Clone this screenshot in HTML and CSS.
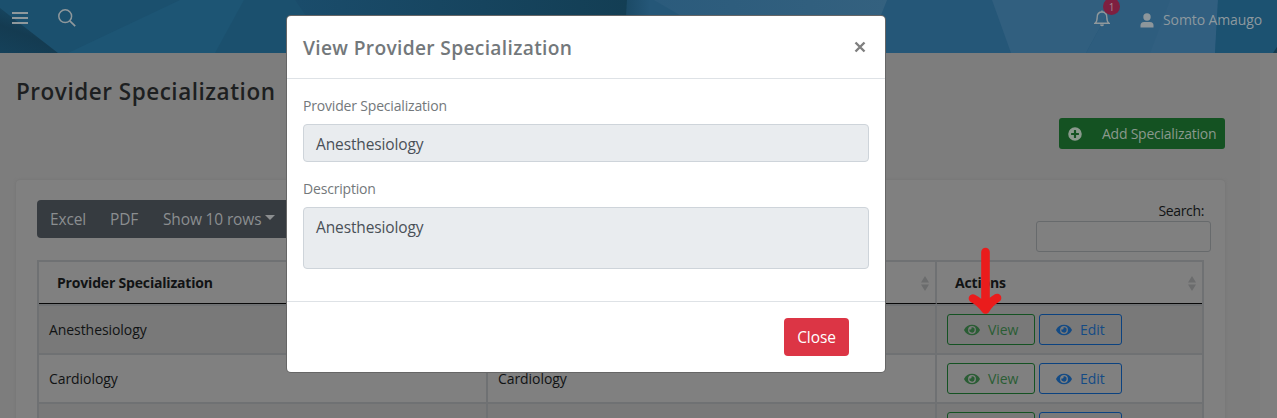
FILE: index.html
```html
<!DOCTYPE html>
<html lang="en">
<head>
<meta charset="utf-8">
<title>Provider Specialization</title>
<link rel="stylesheet" href="styles.css">
</head>
<body>
<svg width="0" height="0" class="defs">
  <symbol id="eye" viewBox="0 0 576 512"><path d="M572.52 241.4C518.29 135.59 410.93 64 288 64S57.68 135.64 3.48 241.41a32.35 32.35 0 0 0 0 29.19C57.71 376.41 165.07 448 288 448s230.32-71.64 284.52-177.41a32.35 32.35 0 0 0 0-29.19zM288 400a144 144 0 1 1 144-144 143.93 143.93 0 0 1-144 144zm0-240a95.31 95.31 0 0 0-25.31 3.79 47.85 47.85 0 0 1-66.9 66.9A95.78 95.78 0 1 0 288 160z"/></symbol>
</svg>
<div class="page">
  <header class="topbar">
    <svg class="facets" viewBox="0 0 1277 53" preserveAspectRatio="none">
      <defs>
        <linearGradient id="fold" x1="0" y1="1" x2="0.5" y2="0"><stop offset="0" stop-color="#15415a"/><stop offset=".5" stop-color="#143b51"/><stop offset="1" stop-color="#184a66"/></linearGradient>
        <linearGradient id="mid"><stop offset="0" stop-color="#1a4c6b"/><stop offset="1" stop-color="#133e54"/></linearGradient>
        <linearGradient id="edge"><stop offset="0" stop-color="#1b4a66"/><stop offset="1" stop-color="#255778"/></linearGradient>
        <linearGradient id="pale" x1="0" x2="1"><stop offset="0" stop-color="#2b5b7c"/><stop offset="1" stop-color="#34617f"/></linearGradient>
      </defs>
      <rect width="1277" height="53" fill="#1b506e"/>
      <path d="M0 8 58 53H0z" fill="url(#fold)"/>
      <path d="M68 53 180 0H244L215 53z" fill="#1d5574"/>
      <path d="M295 0H627L626 53H331z" fill="url(#mid)"/>
      <path d="M627 0H1277V53H626z" fill="#255778"/>
      <path d="M627 0H650V53H626z" fill="url(#edge)"/>
      <path d="M654 0H887L881 15 860 53H745z" fill="url(#pale)"/>
      <path d="M992 0H1115L1086 53H1011z" fill="#315f7f"/>
      <path d="M1115 0H1218L1215 53H1086z" fill="#2e5d7e"/>
      <path d="M1170 0H1218L1215 53H1150z" fill="#315f80"/>
      <path d="M1218 0H1277V53H1215z" fill="#1c5271"/>
      <path d="M1273 53 1277 47V53z" fill="#123b50"/>
    </svg>
    <div class="bar">
      <svg class="menu" viewBox="0 0 16 12"><path d="M0 1H16M0 6H16M0 11H16" stroke="#8f989c" stroke-width="2"/></svg>
      <svg class="lens" viewBox="0 0 18 18"><circle cx="7.2" cy="7.2" r="6.4" fill="none" stroke="#8f989c" stroke-width="1.5"/><path d="M11.8 11.8 17.2 17.2" stroke="#8f989c" stroke-width="1.7"/></svg>
      <div class="bellbox">
        <svg class="bell" viewBox="0 0 16 17"><path d="M1 13.2C2.6 12 3.2 10.5 3.2 7.2 3.2 3.8 5.2 2 8 2s4.800 1.800 4.800 5.200C12.800 10.500 13.400 12 15 13.200z" fill="none" stroke="#8f989c" stroke-width="1.400"/><path d="M8 .5V2M6.500 14.500Q8 16.500 9.500 14.500" fill="none" stroke="#8f989c" stroke-width="1.400"/></svg>
        <span class="badge">1</span>
      </div>
      <svg class="person" viewBox="0 0 14 15"><circle cx="7" cy="4" r="3.700"/><path d="M.5 14.500V12.500Q.5 9 4 9H10Q13.500 9 13.500 12.500V14.500z"/></svg>
      <span class="user">Somto Amaugo</span>
    </div>
  </header>
  <main class="content">
    <h1 class="heading"><span>Provider Specialization</span></h1>
    <div class="toolbar">
      <button class="add"><svg viewBox="0 0 512 512"><path d="M256 8a248 248 0 1 0 0 496 248 248 0 0 0 0-496zm144 276q0 12-12 12h-92v92q0 12-12 12h-56q-12 0-12-12v-92h-92q-12 0-12-12v-56q0-12 12-12h92v-92q0-12 12-12h56q12 0 12 12v92h92q12 0 12 12z"/></svg><span>Add Specialization</span></button>
    </div>
    <section class="card">
      <div class="controls">
        <div class="group"><span class="excel">Excel</span><span class="pdf">PDF</span><span class="rows">Show 10 rows</span><i class="caret"></i></div>
        <div class="search"><label>Search:</label><div class="searchbox"></div></div>
      </div>
      <div class="grid">
        <div class="row head"><div class="cell"><b>Provider Specialization</b></div><div class="cell"><svg class="sort" viewBox="0 0 8 15"><path d="M0 6.500 4 0 8 6.500zM0 8.500H8L4 15z"/></svg></div><div class="cell"><b>Actions</b><svg class="sort" viewBox="0 0 8 15"><path d="M0 6.500 4 0 8 6.500zM0 8.500H8L4 15z"/></svg></div></div>
        <div class="row odd"><div class="cell"><span>Anesthesiology</span></div><div class="cell"></div><div class="cell acts"><button class="view"><svg><use href="#eye"/></svg><span>View</span></button><button class="edit"><svg><use href="#eye"/></svg><span>Edit</span></button></div></div>
        <div class="row"><div class="cell"><span>Cardiology</span></div><div class="cell"><span>Cardiology</span></div><div class="cell acts"><button class="view"><svg><use href="#eye"/></svg><span>View</span></button><button class="edit"><svg><use href="#eye"/></svg><span>Edit</span></button></div></div>
        <div class="row odd"><div class="cell"></div><div class="cell"></div><div class="cell acts"><button class="view"></button><button class="edit"></button></div></div>
      </div>
    </section>
  </main>
</div>
<div class="modal">
  <div class="modal-head"><h2><span>View Provider Specialization</span></h2><svg class="x" viewBox="0 0 12 12"><path d="M1.500 1.500 10.500 10.500M10.500 1.500 1.500 10.500" stroke="#7f7f7f" stroke-width="2.400"/></svg></div>
  <div class="modal-body">
    <label class="l1"><span>Provider Specialization</span></label>
    <div class="field"><span>Anesthesiology</span></div>
    <label class="l2"><span>Description</span></label>
    <div class="field area"><span>Anesthesiology</span></div>
  </div>
  <div class="modal-foot"><button class="close"><span>Close</span></button></div>
</div>
<svg class="arrow" viewBox="0 0 34 68"><path d="M17.500 5V61M5 51.500Q12 55 17.500 62.500Q22 55 29 51" fill="none" stroke="#ea1c1c" stroke-width="8.600" stroke-linecap="round" stroke-linejoin="round"/></svg>
</body>
</html>
```
FILE: styles.css
```css
* { box-sizing: border-box; }
body { margin: 0; width: 1277px; height: 418px; overflow: hidden; position: relative; font-family: "Open Sans", "Noto Sans", sans-serif; font-size: 14px; line-height: 20px; color: #111314; background: #7d7d7d; }
.defs { position: absolute; }
span, b, label { white-space: nowrap; }
button { font: inherit; background: none; border: 0; padding: 0; display: flex; align-items: center; }
.page { height: 418px; overflow: hidden; background: linear-gradient(90deg, #7d7d7d 1260px, #7f7f7f 1260px); }
.topbar { height: 53px; position: relative; }
.facets { position: absolute; inset: 0; width: 100%; height: 100%; }
.bar { position: relative; display: flex; align-items: flex-start; padding-left: 12px; height: 53px; }
.menu { width: 16px; height: 12px; margin-top: 12px; }
.lens { width: 18px; height: 18px; margin: 9px 0 0 30px; }
.bellbox { position: relative; margin: 10px 0 0 1018px; width: 16px; height: 17px; }
.bell { width: 16px; height: 17px; display: block; }
.badge { position: absolute; left: 9px; top: -12px; width: 17px; height: 17px; border-radius: 50%; background: #7e1f40; color: #a58a94; font-size: 10px; line-height: 18px; text-align: center; }
.person { width: 14px; height: 15px; margin: 13px 0 0 30px; fill: #8d969b; }
.user { margin: 10px 0 0 9px; color: #8d999f; letter-spacing: -.1px; }
.content { padding: 0 52px 0 16px; }
.heading { margin: 0; height: 65px; padding-top: 23px; font-size: 22.5px; line-height: 32px; font-weight: 600; letter-spacing: .52px; color: #1d1f21; }
.toolbar { display: flex; justify-content: flex-end; height: 62px; }
.add { width: 166px; height: 31px; border-radius: 3px; background: #145222; color: #8a998d; padding-left: 9px; letter-spacing: -.24px; }
.add svg { width: 14px; height: 14px; margin-right: 20px; fill: #8a998d; }
.card { width: 1209px; height: 260px; background: #808080; border-radius: 4px; box-shadow: 0 0 3px #727272; padding: 20px 14px 0 21px; }
.controls { display: flex; justify-content: space-between; height: 61px; }
.group { display: flex; align-items: center; width: 270px; height: 38px; border-radius: 4px; background: #363b40; color: #8b8e90; font-size: 15.5px; letter-spacing: -.15px; padding-left: 13px; }
.excel { width: 60px; }
.pdf { width: 53px; }
.rows { width: 99px; }
.caret { border: 5px solid transparent; border-top-color: #8b8e90; border-bottom: 0; margin-left: 3px; margin-top: -3px; }
.search { width: 175px; }
.search label { display: block; text-align: right; padding-right: 7px; height: 21px; line-height: 22px; letter-spacing: -.35px; }
.searchbox { height: 31px; border: 1px solid #676a6c; border-radius: 3px; }
.grid { width: 1167px; border: 2px solid #6f7173; margin-top: -1px; }
.row { display: grid; grid-template-columns: 449px 449px 1fr; height: 49px; border-bottom: 2px solid #6f7173; }
.row.odd { background: #797979; }
.row.head { height: 44px; }
.cell { display: flex; align-items: center; padding-left: 10px; border-right: 2px solid #6f7173; }
.cell span { letter-spacing: -.07px; padding-top: 1px; }
.cell:last-child { border-right: 0; }
.head .cell { padding: 1px 6px 0 18px; border-bottom: 1px solid #080808; letter-spacing: -.18px; }
.sort { width: 8px; height: 15px; fill: #6b6c6d; margin-left: auto; }
.view, .edit { height: 31px; border: 1px solid #145222; border-radius: 3px; color: #2a5d34; width: 88px; padding-left: 16px; }
.edit { width: 83px; margin-left: 4px; border-color: #0b4280; color: #144b85; }
.view svg, .edit svg { width: 16px; height: 14px; fill: currentColor; margin-right: 8px; }
.modal { position: absolute; left: 287px; top: 16px; width: 598px; height: 356px; background: #fff; border-radius: 4px; box-shadow: 0 0 0 1px #666; color: #73787b; }
.modal-head { height: 63px; border-bottom: 1px solid #dee2e6; padding: 0 19px 0 16px; display: flex; justify-content: space-between; align-items: center; }
.modal-head h2 { margin: 2px 0 0; font-size: 19.2px; line-height: 30px; font-weight: 600; letter-spacing: .33px; }
.x { width: 12px; height: 12px; }
.modal-body { height: 223px; padding: 17px 16px 0; border-bottom: 1px solid #dee2e6; }
.modal-body label { display: block; height: 28px; letter-spacing: -.18px; }
.modal-body .l2 { margin-top: 17px; }
.field { height: 38px; border: 1px solid #ced4da; border-radius: 4px; background: #e9ecef; color: #495057; font-size: 15.5px; letter-spacing: -.12px; line-height: 24px; padding: 7px 12px; }
.area { height: 62px; }
.modal-foot { display: flex; justify-content: flex-end; padding: 16px 36px; }
.close { width: 65px; height: 38px; border-radius: 4px; background: #dc3545; color: #fff; font-size: 15.5px; letter-spacing: -.1px; justify-content: center; }
.arrow { position: absolute; left: 968px; top: 247px; width: 34px; height: 68px; }
```
